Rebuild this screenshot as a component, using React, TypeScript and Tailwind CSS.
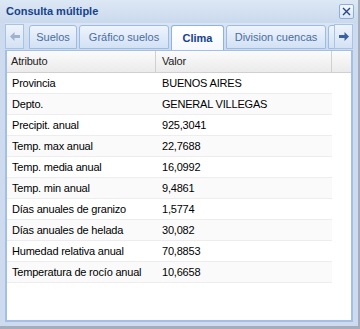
import React from "react";

const rows: [string, string][] = [
  ["Provincia", "BUENOS AIRES"],
  ["Depto.", "GENERAL VILLEGAS"],
  ["Precipit. anual", "925,3041"],
  ["Temp. max anual", "22,7688"],
  ["Temp. media anual", "16,0992"],
  ["Temp. min anual", "9,4861"],
  ["Días anuales de granizo", "1,5774"],
  ["Días anuales de helada", "30,082"],
  ["Humedad relativa anual", "70,8853"],
  ["Temperatura de rocío anual", "10,6658"],
];

const tabs = [
  { label: "Suelos", w: "w-[48px]" },
  { label: "Gráfico suelos", w: "w-[90px]" },
  { label: "Clima", w: "w-[53px]", active: true },
  { label: "Division cuencas", w: "w-[100px]" },
  { label: "", w: "w-[20px]" },
];

const Arrow = ({ dir, color }: { dir: "left" | "right"; color: string }) => (
  <svg width="10" height="9" viewBox="0 0 10 9">
    <path
      d={dir === "left" ? "M0 4.5 L4.5 0 L4.5 3 L10 3 L10 6 L4.5 6 L4.5 9 Z" : "M10 4.5 L5.5 0 L5.5 3 L0 3 L0 6 L5.5 6 L5.5 9 Z"}
      fill={color}
    />
  </svg>
);

export default function App() {
  return (
    <div className="w-[360px] h-[329px] bg-[#cedbee] border-r-[2px] border-b-[3px] border-[#a3adbb] flex flex-col font-['Liberation_Sans',Arial,sans-serif] overflow-hidden">
      {/* Header */}
      <div className="h-[23px] shrink-0 flex items-center justify-between pl-[6px] pr-[4px] bg-gradient-to-b from-[#dde8f5] to-[#cad9ed]">
        <span className="text-[11px] font-bold text-[#15428b]">Consulta múltiple</span>
        <div className="w-[15px] h-[15px] border border-[#8eaed8] rounded-[2px] bg-gradient-to-b from-[#f4f8fd] to-[#dbe6f5] flex items-center justify-center">
          <svg width="9" height="9" viewBox="0 0 9 9">
            <path d="M1 1 L8 8 M8 1 L1 8" stroke="#25468a" strokeWidth="1.4" />
          </svg>
        </div>
      </div>

      {/* Tab panel */}
      <div className="flex-1 flex flex-col px-[5px] pb-[4px] min-h-0">
        <div className="h-[27px] shrink-0 flex items-end bg-gradient-to-b from-[#d9e5f4] to-[#cbdaee] relative">
          <div className="w-[19px] h-[25px] mb-[1px] border border-[#a9c3e6] bg-gradient-to-b from-[#eef3fb] to-[#d4e2f4] flex items-center justify-center">
            <Arrow dir="left" color="#9fb3cf" />
          </div>
          <div className="flex-1 flex items-end gap-[2px] pl-[5px] overflow-hidden h-full">
            {tabs.map((t, i) =>
              t.active ? (
                <div
                  key={i}
                  className={`${t.w} shrink-0 h-[26px] border border-b-0 border-[#8db2e3] rounded-t-[3px] bg-gradient-to-b from-[#ffffff] to-[#f4f8fd] flex items-center justify-center text-[11px] font-bold text-[#15428b] relative z-10 -mb-[1px]`}
                >
                  {t.label}
                </div>
              ) : (
                <div
                  key={i}
                  className={`${t.w} shrink-0 h-[24px] mb-[1px] border border-[#9ebbe3] rounded-t-[3px] bg-gradient-to-b from-[#eef4fc] to-[#d2e1f5] flex items-center justify-center text-[11px] text-[#4a6d9f] whitespace-nowrap`}
                >
                  {t.label}
                </div>
              )
            )}
          </div>
          <div className="absolute right-0 bottom-[1px] w-[19px] h-[25px] border border-[#a9c3e6] bg-gradient-to-b from-[#eef3fb] to-[#d4e2f4] flex items-center justify-center">
            <Arrow dir="right" color="#3b62a0" />
          </div>
        </div>

        {/* Body */}
        <div className="flex-1 border-[2px] border-t border-[#a3bfe6] bg-white min-h-0 flex flex-col">
          <div className="h-[22px] flex border-b border-[#d0d0d0] bg-gradient-to-b from-[#fbfbfb] to-[#ebebeb] text-[11px] text-[#222] tracking-[-0.2px]">
            <div className="w-[149px] flex items-center pl-[4px] border-r border-[#d0d0d0]">Atributo</div>
            <div className="w-[176px] flex items-center pl-[6px] border-r border-[#d0d0d0]">Valor</div>
            <div className="flex-1" />
          </div>
          <div className="w-[325px]">
            {rows.map(([a, v], i) => (
              <div
                key={i}
                className={`h-[21px] flex items-center border-b border-[#ededed] text-[11px] text-black tracking-[-0.2px] ${i % 2 === 1 ? "bg-[#fafafa]" : "bg-white"}`}
              >
                <div className="w-[149px] pl-[5px] whitespace-nowrap">{a}</div>
                <div className="flex-1 pl-[6px]">{v}</div>
              </div>
            ))}
          </div>
        </div>
      </div>
    </div>
  );
}
